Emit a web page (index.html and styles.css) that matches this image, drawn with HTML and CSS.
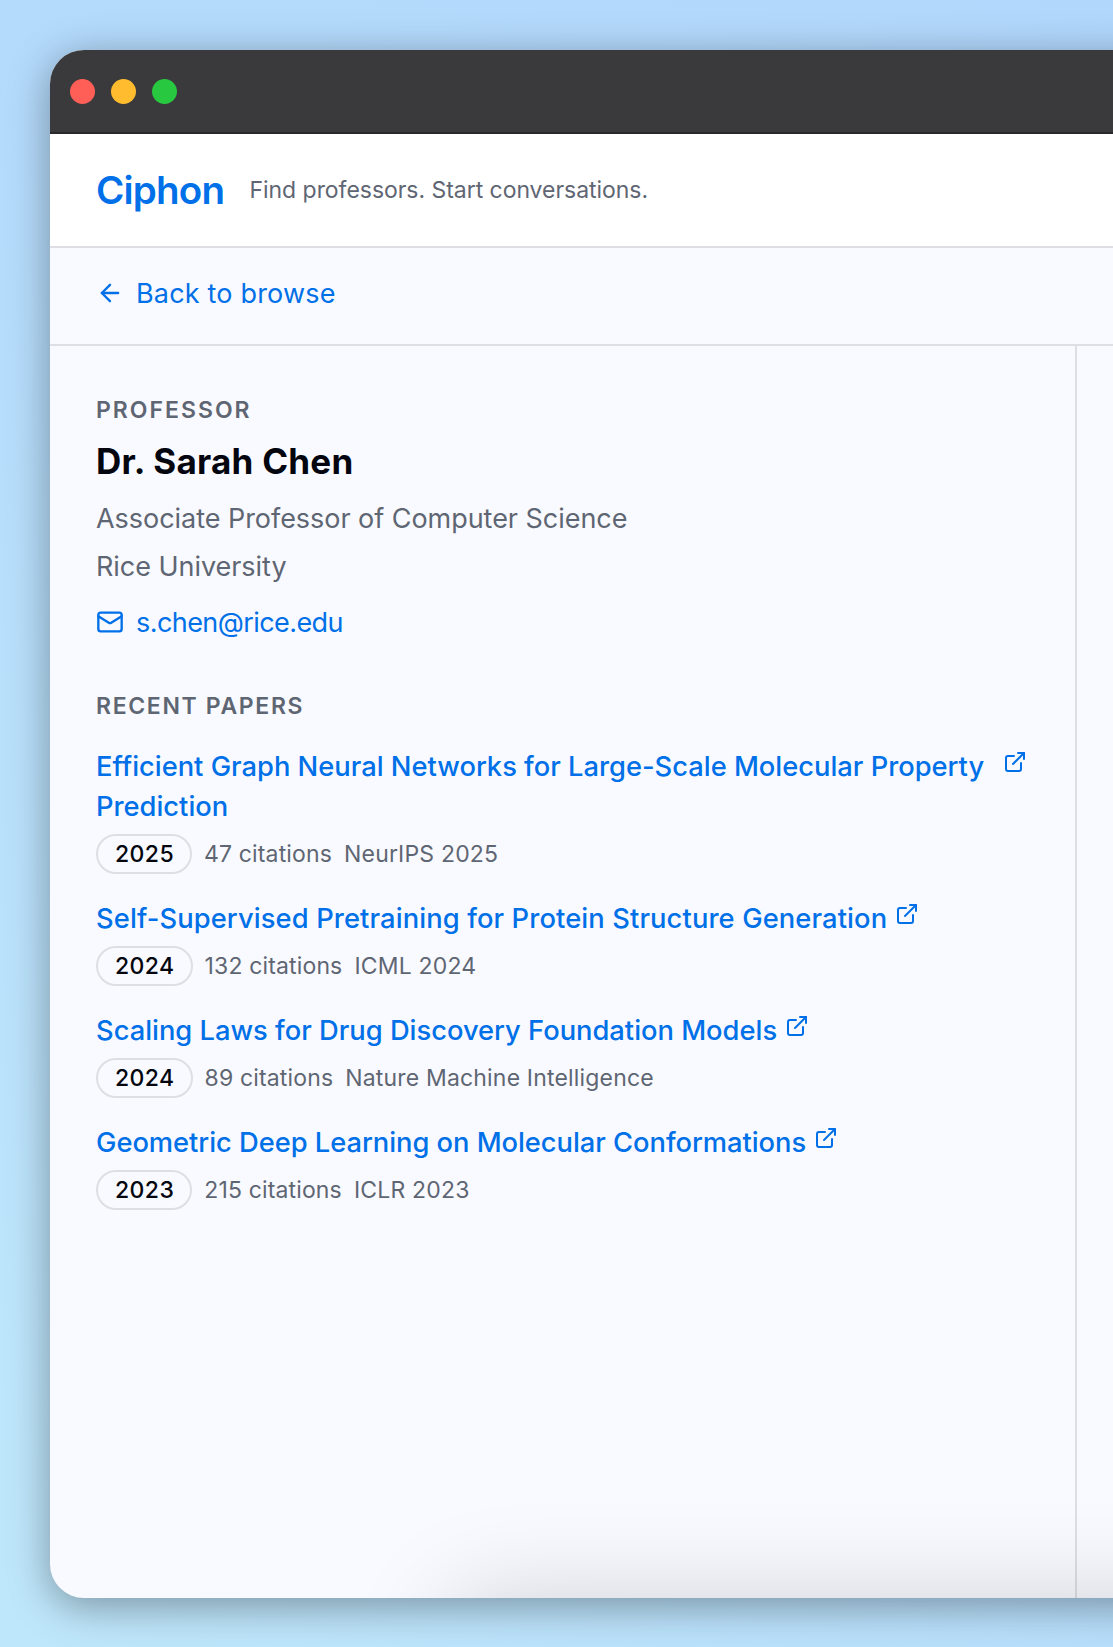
FILE: index.html
```html
<!DOCTYPE html>
<html lang="en">
<head>
  <meta charset="UTF-8" />
  <meta name="viewport" content="width=device-width, initial-scale=1" />
  <title>Ciphon</title>
  <link rel="stylesheet" href="styles.css">
</head>
<body>
  <!-- shared icons -->
  <svg class="sprite" aria-hidden="true">
    <symbol id="icon-arrow-left" viewBox="0 0 24 24">
      <path d="m12 19-7-7 7-7"/><path d="M19 12H5"/>
    </symbol>
    <symbol id="icon-mail" viewBox="0 0 24 24">
      <rect width="20" height="16" x="2" y="4" rx="2"/>
      <path d="m22 7-8.97 5.7a1.94 1.94 0 0 1-2.06 0L2 7"/>
    </symbol>
    <symbol id="icon-external" viewBox="0 0 24 24">
      <path d="M15 3h6v6"/><path d="M10 14 21 3"/>
      <path d="M18 13v6a2 2 0 0 1-2 2H5a2 2 0 0 1-2-2V8a2 2 0 0 1 2-2h6"/>
    </symbol>
  </svg>

  <div class="window">
    <div class="titlebar">
      <span class="dot red"></span>
      <span class="dot yellow"></span>
      <span class="dot green"></span>
    </div>

    <header class="header">
      <div class="logo">Ciphon</div>
      <div class="tagline">Find professors. Start conversations.</div>
    </header>

    <nav class="back-bar">
      <a class="back-link" href="#"><svg class="icon"><use href="#icon-arrow-left"/></svg><span>Back to browse</span></a>
    </nav>

    <main class="content">
      <section class="profile">
        <h2 class="label label-professor">Professor</h2>
        <h1 class="name">Dr. Sarah Chen</h1>
        <p class="role">Associate Professor of Computer Science</p>
        <p class="school">Rice University</p>
        <a class="email" href="#"><svg class="icon"><use href="#icon-mail"/></svg><span>s.chen@rice.edu</span></a>

        <h2 class="label label-papers">Recent Papers</h2>
        <ul class="papers">
          <li class="paper">
            <a class="paper-link" href="#"><span class="paper-title">Efficient Graph Neural Networks for Large-Scale Molecular Property Prediction</span><svg class="icon icon-sm"><use href="#icon-external"/></svg></a>
            <div class="meta"><span class="year">2025</span><span class="cites">47 citations</span><span class="venue">NeurIPS 2025</span></div>
          </li>
          <li class="paper">
            <a class="paper-link" href="#"><span class="paper-title title-protein">Self-Supervised Pretraining for Protein Structure Generation</span><svg class="icon icon-sm"><use href="#icon-external"/></svg></a>
            <div class="meta"><span class="year">2024</span><span class="cites">132 citations</span><span class="venue">ICML 2024</span></div>
          </li>
          <li class="paper">
            <a class="paper-link" href="#"><span class="paper-title">Scaling Laws for Drug Discovery Foundation Models</span><svg class="icon icon-sm"><use href="#icon-external"/></svg></a>
            <div class="meta"><span class="year">2024</span><span class="cites">89 citations</span><span class="venue">Nature Machine Intelligence</span></div>
          </li>
          <li class="paper">
            <a class="paper-link" href="#"><span class="paper-title title-geometric">Geometric Deep Learning on Molecular Conformations</span><svg class="icon icon-sm"><use href="#icon-external"/></svg></a>
            <div class="meta"><span class="year">2023</span><span class="cites">215 citations</span><span class="venue">ICLR 2023</span></div>
          </li>
        </ul>
      </section>
      <section class="side"></section>
    </main>
    <div class="bottom-glow"></div>
  </div>
</body>
</html>
```
FILE: styles.css
```css
* {
  box-sizing: border-box;
  margin: 0;
  padding: 0;
}

body {
  height: 1647px;
  padding: 50px 0 49px 50px;
  overflow: hidden;
  background: radial-gradient(circle at 0 100%, #bfe7fb 0, #b9e0fb 45%, #b1d7fc 100%);
  font-family: Inter, "Liberation Sans", sans-serif;
  color: #04060f;
}

a {
  color: #0070e8;
  text-decoration: none;
}

.sprite {
  display: none;
}

.icon {
  width: 28px;
  height: 28px;
  flex: none;
  fill: none;
  stroke: currentColor;
  stroke-width: 2;
  stroke-linecap: round;
  stroke-linejoin: round;
}

.icon-sm {
  width: 24px;
  height: 24px;
  margin-top: 4px;
}

.window {
  position: relative;
  display: flex;
  flex-direction: column;
  width: 1200px;
  height: 1548px;
  border-radius: 34px;
  overflow: hidden;
  background: #f9faff;
  box-shadow: 0 8px 40px rgba(0, 0, 0, 0.36);
}

.titlebar {
  display: flex;
  align-items: center;
  gap: 16px;
  height: 84px;
  padding-left: 20px;
  background: #3a3a3c;
  border-bottom: 2px solid #29282a;
}

.dot {
  width: 25px;
  height: 25px;
  border-radius: 50%;
}
.red { background: #ff5f57; }
.yellow { background: #febc2e; }
.green { background: #28c840; }

.header {
  display: flex;
  align-items: center;
  height: 114px;
  padding-left: 46px;
  background: #fff;
  border-bottom: 2px solid #dddfe5;
}

.logo {
  width: 153.5px;
  font-size: 38.5px;
  font-weight: 600;
  letter-spacing: -0.8px;
  color: #0070e8;
}

.tagline {
  font-size: 23px;
  letter-spacing: -0.04px;
  color: #5f6673;
}

.back-bar {
  height: 98px;
  padding: 31px 0 0 46px;
  border-bottom: 2px solid #dddfe5;
}

.back-link,
.email {
  display: flex;
  align-items: center;
  gap: 12px;
  height: 28px;
  font-size: 27px;
}

.back-link { letter-spacing: 0.18px; }

.content {
  display: flex;
  flex: 1;
}

.profile {
  width: 1027px;
  padding: 48px 48px 0 46px;
  border-right: 2px solid #dddfe5;
}

.label {
  font-size: 23px;
  font-weight: 600;
  line-height: 32px;
  letter-spacing: 2px;
  text-transform: uppercase;
  color: #5f6673;
}

.name {
  margin-top: 11px;
  font-size: 35px;
  font-weight: 700;
  line-height: 48px;
  letter-spacing: 0.25px;
}

.role,
.school {
  font-size: 27px;
  line-height: 44px;
  letter-spacing: -0.04px;
  color: #5f6673;
}
.role { margin-top: 12px; }
.school { margin-top: 4px; }

.email {
  margin-top: 19px;
  letter-spacing: -0.57px;
}

.label-papers {
  margin-top: 54px;
  letter-spacing: 1.65px;
}

.papers {
  display: flex;
  flex-direction: column;
  gap: 24px;
  margin-top: 24px;
  list-style: none;
}

.paper-link {
  display: flex;
  gap: 8px;
}

.paper-title {
  padding-top: 1px;
  font-size: 27.3px;
  font-weight: 500;
  line-height: 40px;
}
.title-protein { letter-spacing: 0.12px; }
.title-geometric { letter-spacing: -0.03px; }

.meta {
  display: flex;
  align-items: center;
  gap: 12px;
  margin-top: 7px;
  font-size: 23px;
  line-height: 36px;
  color: #5f6673;
}

.year {
  padding: 0 16px 0 17px;
  border: 2px solid #dddfe5;
  border-radius: 20px;
  font-weight: 500;
  letter-spacing: 0.4px;
  color: #04060f;
}

.cites { letter-spacing: 0.15px; }
.venue { letter-spacing: 0.18px; }

/* soft shadow of the panel sitting under the fold */
.bottom-glow {
  position: absolute;
  left: 400px;
  top: 1550px;
  width: 1000px;
  height: 200px;
  border-radius: 34px;
  box-shadow: 0 0 100px rgba(0, 0, 0, 0.17);
}
```
